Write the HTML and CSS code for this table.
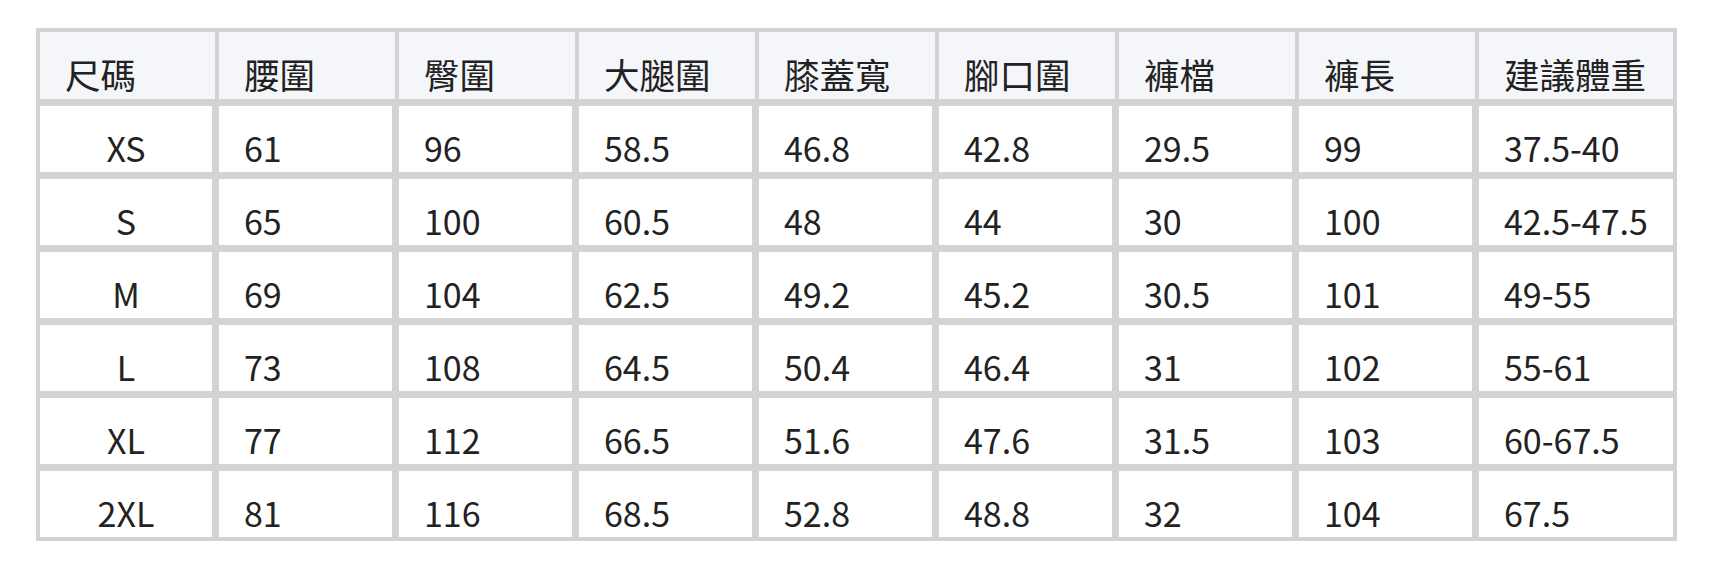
FILE: index.html
```html
<!DOCTYPE html>
<html lang="zh-Hant">
<head>
<meta charset="utf-8">
<title>尺碼表</title>
<link rel="stylesheet" href="styles.css">
</head>
<body>
<div class="size-table" role="table">
  <div class="row head" role="row">
    <div class="cell" role="columnheader">尺碼</div>
    <div class="cell" role="columnheader">腰圍</div>
    <div class="cell" role="columnheader">臀圍</div>
    <div class="cell" role="columnheader">大腿圍</div>
    <div class="cell" role="columnheader">膝蓋寬</div>
    <div class="cell" role="columnheader">腳口圍</div>
    <div class="cell" role="columnheader">褲檔</div>
    <div class="cell" role="columnheader">褲長</div>
    <div class="cell" role="columnheader">建議體重</div>
  </div>
  <div class="row" role="row">
    <div class="cell" role="cell">XS</div>
    <div class="cell" role="cell">61</div>
    <div class="cell" role="cell">96</div>
    <div class="cell" role="cell">58.5</div>
    <div class="cell" role="cell">46.8</div>
    <div class="cell" role="cell">42.8</div>
    <div class="cell" role="cell">29.5</div>
    <div class="cell" role="cell">99</div>
    <div class="cell" role="cell">37.5-40</div>
  </div>
  <div class="row" role="row">
    <div class="cell" role="cell">S</div>
    <div class="cell" role="cell">65</div>
    <div class="cell" role="cell">100</div>
    <div class="cell" role="cell">60.5</div>
    <div class="cell" role="cell">48</div>
    <div class="cell" role="cell">44</div>
    <div class="cell" role="cell">30</div>
    <div class="cell" role="cell">100</div>
    <div class="cell" role="cell">42.5-47.5</div>
  </div>
  <div class="row" role="row">
    <div class="cell" role="cell">M</div>
    <div class="cell" role="cell">69</div>
    <div class="cell" role="cell">104</div>
    <div class="cell" role="cell">62.5</div>
    <div class="cell" role="cell">49.2</div>
    <div class="cell" role="cell">45.2</div>
    <div class="cell" role="cell">30.5</div>
    <div class="cell" role="cell">101</div>
    <div class="cell" role="cell">49-55</div>
  </div>
  <div class="row" role="row">
    <div class="cell" role="cell">L</div>
    <div class="cell" role="cell">73</div>
    <div class="cell" role="cell">108</div>
    <div class="cell" role="cell">64.5</div>
    <div class="cell" role="cell">50.4</div>
    <div class="cell" role="cell">46.4</div>
    <div class="cell" role="cell">31</div>
    <div class="cell" role="cell">102</div>
    <div class="cell" role="cell">55-61</div>
  </div>
  <div class="row" role="row">
    <div class="cell" role="cell">XL</div>
    <div class="cell" role="cell">77</div>
    <div class="cell" role="cell">112</div>
    <div class="cell" role="cell">66.5</div>
    <div class="cell" role="cell">51.6</div>
    <div class="cell" role="cell">47.6</div>
    <div class="cell" role="cell">31.5</div>
    <div class="cell" role="cell">103</div>
    <div class="cell" role="cell">60-67.5</div>
  </div>
  <div class="row last" role="row">
    <div class="cell" role="cell">2XL</div>
    <div class="cell" role="cell">81</div>
    <div class="cell" role="cell">116</div>
    <div class="cell" role="cell">68.5</div>
    <div class="cell" role="cell">52.8</div>
    <div class="cell" role="cell">48.8</div>
    <div class="cell" role="cell">32</div>
    <div class="cell" role="cell">104</div>
    <div class="cell" role="cell">67.5</div>
  </div>
</div>
</body>
</html>
```

FILE: styles.css
```css
html, body {
  margin: 0;
  padding: 0;
  background: #ffffff;
}

body {
  font-family: "Noto Sans CJK TC", "Noto Sans CJK SC", "Noto Sans", sans-serif;
  color: #222222;
}

.size-table {
  display: grid;
  grid-template-columns: 179px repeat(7, 180px) 194px;
  width: max-content;
  margin: 28px 0 0 36px;
  border: 4px solid #d3d3d3;
}

.row {
  display: contents;
}

.cell {
  box-sizing: border-box;
  display: flex;
  align-items: flex-end;
  height: 73px;
  padding: 0 0 0 25px;
  font-size: 34px;
  line-height: normal;
  white-space: nowrap;
  background: #ffffff;
  border-right: 7px solid #d3d3d3;
  border-bottom: 7px solid #d3d3d3;
}

.cell:last-child {
  border-right: none;
}

.row .cell:first-child {
  justify-content: center;
  padding-left: 0;
}

.head .cell {
  height: 74px;
  font-size: 35.5px;
  background: #f5f6fa;
  border-right-width: 4px;
}

.head .cell:first-child {
  justify-content: flex-start;
  padding-left: 25px;
}

.head .cell:last-child {
  border-right: none;
}

.last .cell {
  height: 66px;
  border-bottom: none;
}
```
